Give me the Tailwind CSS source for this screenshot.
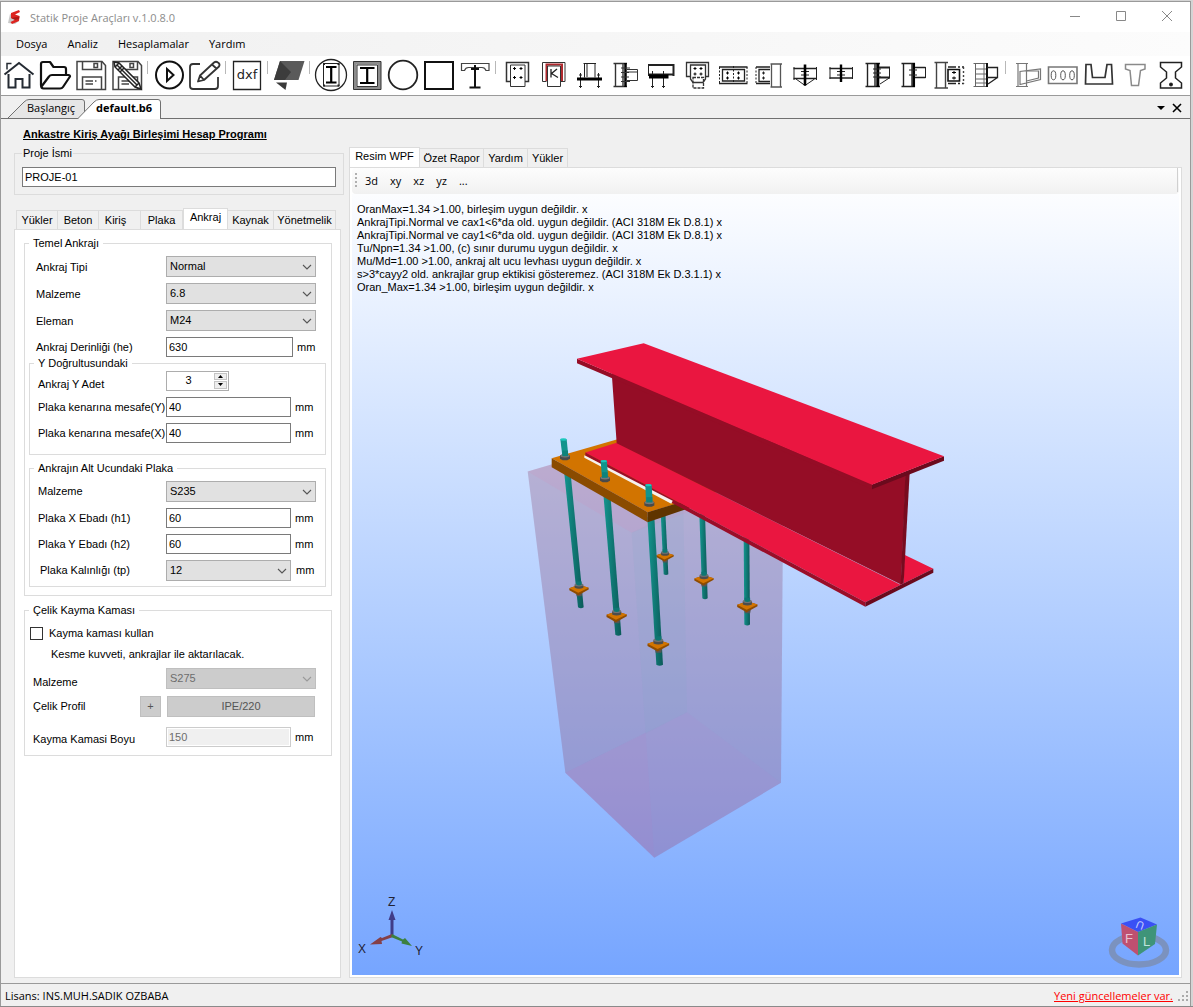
<!DOCTYPE html>
<html lang="tr">
<head>
<meta charset="utf-8">
<title>Statik Proje Araçları</title>
<script src="https://cdn.jsdelivr.net/npm/@tailwindcss/browser@4"></script>
</head>
<body class="bg-[#d4d4d4]">
<div class="flex h-screen flex-col border-b border-[#8a8a8a] pt-px pr-0.5 font-['Liberation_Sans',sans-serif] text-[11px] leading-[13px] text-black">
<div class="flex min-h-0 flex-1 flex-col border-t border-r border-l border-[#9a9a9a] bg-[#f0f0f0]">

  <!-- Title bar -->
  <header class="flex h-[30px] shrink-0 items-center bg-white pl-1.5 font-['Open_Sans',sans-serif] text-[11px] text-[#8c8c8c]">
    <svg class="mr-[7px] size-4" viewBox="0 0 16 16"><path d="M3 5L1 14L8 15L12 12L10 8Z" fill="#c9c9c9"/><path d="M4 4L12 1L13 3L8 5.500L12.500 7L12 12L5 15L3.500 13L8.500 10.500L4 9Z" fill="#dd2420"/><path d="M4 9L12.500 7.500L12 10L8 11Z" fill="#b01815"/></svg>
    <h1 class="flex-1">Statik Proje Araçları v.1.0.8.0</h1>
    <button aria-label="Küçült" class="flex h-full w-[46px] items-center justify-center"><svg class="size-3" viewBox="0 0 12 12" fill="none" stroke="#888"><path d="M1 5.500H11"/></svg></button>
    <button aria-label="Ekranı kapla" class="flex h-full w-[46px] items-center justify-center"><svg class="size-3" viewBox="0 0 12 12" fill="none" stroke="#888"><path d="M1.500 .5H10.500V9.500H1.500Z"/></svg></button>
    <button aria-label="Kapat" class="flex h-full w-[46px] items-center justify-center"><svg class="size-3" viewBox="0 0 12 12" fill="none" stroke="#888"><path d="M1 0L11 10M11 0L1 10"/></svg></button>
  </header>

  <!-- Menu -->
  <nav class="flex h-6 shrink-0 items-center gap-5 bg-linear-to-r from-[#f0f0f0] to-[#fcfcfc] pb-0.5 pl-[15px] font-['Open_Sans',sans-serif] text-[11px]">
    <button>Dosya</button><button>Analiz</button><button>Hesaplamalar</button><button>Yardım</button>
  </nav>

  <!-- Icon toolbar -->
  <div class="flex h-[39px] shrink-0 items-start overflow-hidden bg-white pt-px [&>button]:shrink-0 [&>i]:mx-0.5 [&>i]:mt-1 [&>i]:h-[13px] [&>i]:w-0.5 [&>i]:shrink-0 [&>i]:border-l [&>i]:border-[#b8b8b8] [&_svg]:size-9">
    <button aria-label="Ana sayfa"><svg viewBox="0 0 36 36" fill="none" stroke="#252b33" stroke-width="2"><path d="M3.500 17.500L18 6L32.500 17.500M7.500 17V30.500H14.500V22H21.500V30.500H28.500V17"/><path d="M6 12.500V6.500H10.500" stroke-width="1.500"/></svg></button>
    <button aria-label="Aç"><svg viewBox="0 0 36 36" fill="none" stroke="#111" stroke-width="2.200" stroke-linejoin="round"><path d="M4 28V7Q4 5 6 5H13L16.500 10H27Q29 10 29 12V17"/><path d="M4 28Q4 31.500 6.500 31.500H23Q25 31.500 26 30L33 19.500Q33 18 31.500 18H15Q13 18 12 19.500L4.500 29.500"/></svg></button>
    <button aria-label="Kaydet"><svg viewBox="0 0 36 36" fill="none" stroke="#444" stroke-width="1.500"><path d="M4 4.500H29L32.500 8.500V32.500H4Z"/><path d="M9.500 5V12.500H28.500V5M9.500 32V20H28.500V32"/><path d="M21 6.500H24.500V10.500H21Z"/><path d="M12.500 24H20M22 24H23.500M12.500 27H20"/></svg></button>
    <button aria-label="Farklı kaydet"><svg viewBox="0 0 36 36" fill="none" stroke="#444" stroke-width="1.500"><path d="M4 4.500H29L32.500 8.500V32.500H4Z"/><path d="M9.500 5V12.500H28.500V5M9.500 32V20H28.500V32"/><path d="M21 6.500H24.500V10.500H21Z"/><path d="M12.500 24H20M12.500 27H20"/><path d="M5 5L10 6L30 26L32 32L26 30L6 10Z" fill="#fff" stroke="#222"/><path d="M6 10L10 6M9 13L13 9M26 30L30 26M8 8L28 28M11 15L15 11" stroke="#222"/></svg></button>
    <i></i>
    <button aria-label="Çalıştır"><svg viewBox="0 0 36 36" fill="none" stroke="#111" stroke-width="2"><circle cx="18.500" cy="18" r="13.500"/><path d="M16 12L22.500 18L16 24Z"/></svg></button>
    <button aria-label="Düzenle"><svg viewBox="0 0 36 36" fill="none" stroke="#333" stroke-width="1.800" stroke-linejoin="round"><path d="M13 7H6Q3 7 3 10V29Q3 32 6 32H28Q31 32 31 29V20"/><path d="M11 24.500L13 18.500L27 5.500Q29 4 31 5.500Q33.500 7 32 9.500L17 23ZM25 7.500L30 12M13 18.500L17 23"/></svg></button>
    <i></i>
    <button aria-label="DXF"><svg viewBox="0 0 36 36"><path d="M4.500 4.500H31.500V32.500H4.500Z" fill="none" stroke="#222" stroke-width="1.300"/><text x="18" y="22" text-anchor="middle" font-family="DejaVu Sans" font-size="13" fill="#222">dxf</text></svg></button>
    <i></i>
    <button aria-label="Levha"><svg viewBox="0 0 36 36"><path d="M9 4H33.500L27.500 23H3Z" fill="#5a5a5a"/><path d="M9 4L20 15L14 23H3Z" fill="#3c3c3c"/><path d="M5 25.500H16L14.500 33Z" fill="#3a3a3a"/></svg></button>
    <i></i>
    <button aria-label="I kesit daire"><svg viewBox="0 0 36 36" fill="none" stroke="#222"><circle cx="18" cy="18" r="15.500" stroke-width="1.300"/><path d="M10.500 6.500H26V29H10.500Z"/><path d="M13 10H23.500M13 25.500H23.500M18.200 10V26" stroke="#000" stroke-width="2.200"/><path d="M10 7h2M24.500 7h2M10 28.500h2M24.500 28.500h2" stroke-width="2"/></svg></button>
    <button aria-label="I kesit kutu"><svg viewBox="0 0 36 36" fill="none" stroke="#333"><path d="M6 6H30.500V31H6Z" stroke="#8c8c8c" stroke-width="3"/><path d="M4.500 4.500H32V32.500H4.500ZM8 8H28.500V29.500H8Z"/><path d="M11 11H25.500M11 26H25.500M18.200 11V26" stroke="#000" stroke-width="2.200"/></svg></button>
    <button aria-label="Daire kesit"><svg viewBox="0 0 36 36" fill="none" stroke="#222" stroke-width="1.800"><circle cx="18" cy="18" r="14.300"/></svg></button>
    <button aria-label="Kare kesit"><svg viewBox="0 0 36 36" fill="none" stroke="#111" stroke-width="2"><path d="M4 5H32V32H4Z"/></svg></button>
    <button aria-label="Kompozit"><svg viewBox="0 0 36 36" fill="none" stroke="#444" stroke-width="1.200"><path d="M4.500 6.500H32V13.500H29Q28 10.500 25 10.500H11.500Q8.500 10.500 7.500 13.500H4.500Z"/><path d="M18 8V30.500M12.500 30.500H23.500M14 12H22" stroke="#111" stroke-width="2"/></svg></button>
    <i></i>
    <button aria-label="Birleşim 1"><svg viewBox="0 0 36 36" fill="none" stroke="#333"><path d="M11.500 24.500H7.500V5.500H29.500V24.500H26" stroke-width="1.500"/><path d="M11.500 8H26V29.500H11.500Z"/><path d="M14 11.500h3M15.500 10v3M20.500 11.500h3M22 10v3M14 20.500h3M15.500 19v3M20.500 20.500h3M22 19v3" stroke="#000"/></svg></button>
    <button aria-label="Birleşim 2"><svg viewBox="0 0 36 36" fill="none" stroke="#333"><path d="M11.500 24.500H7.500V5.500H30V24.500H26"/><path d="M11.500 24V7.500H27V24" stroke="#b0282d" stroke-width="2"/><path d="M12.500 29.500V9H25.500V29.500Z"/><path d="M16 12V20.500M22 12L16.500 16.500L23 20.500" stroke="#222" stroke-width="1.300"/></svg></button>
    <button aria-label="Birleşim 3"><svg viewBox="0 0 36 36" fill="none" stroke="#222"><path d="M13.500 6V20.500M24 6V20.500M12.500 6.500H25M16 6V20M9.500 16V31M27.500 16V31M8 18h3M26 18h3M8 29.500h3M26 29.500h3"/><path d="M6 22H31" stroke="#000" stroke-width="3"/></svg></button>
    <button aria-label="Birleşim 4"><svg viewBox="0 0 36 36" fill="none" stroke="#333"><path d="M8.500 6V30M6.500 6.500H20M6.500 29.500H20M16 6V30" stroke-width="1.400"/><path d="M18.500 6V30" stroke="#000" stroke-width="2.500"/><path d="M20 12.500H30.500V23.500H20M20 15H30M14 11h9M14 15.500h8M14 20h8M14 24.500h9"/></svg></button>
    <button aria-label="Birleşim 5"><svg viewBox="0 0 36 36" fill="none" stroke="#222"><path d="M5.500 8H30.500M30.500 7V19M5.500 17.500H31" stroke-width="2"/><path d="M5.500 7V19M9.500 14V31M20.500 14V31M8 29.500h3M19 29.500h3"/><path d="M6 19.500H25.500" stroke="#000" stroke-width="4"/></svg></button>
    <button aria-label="Birleşim 6"><svg viewBox="0 0 36 36" fill="none" stroke="#333" stroke-width="1.300"><path d="M11.500 19.500H7.500V5.500H29.500V19.500H26.500"/><path d="M11.500 8H26.500V22L24 25.500H14L11.500 22Z"/><path d="M14 20.500H24.500V31H14Z" stroke-dasharray="3 1"/><path d="M14.500 11.500h3M16 10v3M20.500 11.500h3M22 10v3M14.500 17h3M16 15.500v3M20.500 17h3M22 15.500v3" stroke="#000" stroke-width="1"/></svg></button>
    <button aria-label="Birleşim 7"><svg viewBox="0 0 36 36" fill="none" stroke="#222"><path d="M4 10H32.500M4 26.500H32.500" stroke-width="1.600"/><path d="M4.500 10V27M32 10V27M18.500 9V27" stroke-dasharray="2 1.500"/><path d="M7.500 12.500H29.500V24H7.500Z" stroke-width="1.300"/><path d="M11 16h3M12.500 14.500v3M22 16h3M23.500 14.500v3M11 21h3M12.500 19.500v3M22 21h3M23.500 19.500v3" stroke="#000"/></svg></button>
    <button aria-label="Birleşim 8"><svg viewBox="0 0 36 36" fill="none" stroke="#222"><path d="M19 10H5M19 26.500H5" stroke-width="1.500"/><path d="M5 10V27" stroke-dasharray="2 1.500"/><path d="M19 12.500H8V24.500H19" stroke-width="1.300"/><path d="M11 16h3M12.500 14.500v3M11 21h3M12.500 19.500v3"/><path d="M19.500 7H31M19.500 30H31M20.500 7V30M29.500 7V30" stroke="#555" stroke-width="1.300"/></svg></button>
    <button aria-label="Birleşim 9"><svg viewBox="0 0 36 36" fill="none" stroke="#222"><path d="M6.500 11.500H30M6.500 21.500H30" stroke-width="1.500"/><path d="M7 10V23M29.500 10V23M14 14.500h8M14 18h8M9 22L18 28.500L27.500 22"/><path d="M18 7.500V28.500" stroke="#000" stroke-width="2.600"/></svg></button>
    <button aria-label="Birleşim 10"><svg viewBox="0 0 36 36" fill="none" stroke="#222"><path d="M6.500 11.500H30M6.500 21H30" stroke-width="1.500"/><path d="M7 10V22M29.500 10V22M14 14.500h8M14 18h8"/><path d="M18 7.500V25" stroke="#000" stroke-width="2.400"/></svg></button>
    <button aria-label="Birleşim 11"><svg viewBox="0 0 36 36" fill="none" stroke="#222"><path d="M8.500 6V30M6.500 6.500H21M6.500 29.500H21M16 6V30" stroke-width="1.400"/><path d="M18.800 6V30" stroke="#000" stroke-width="3"/><path d="M20 10.500H31M20 20.500H31" stroke-width="1.800"/><path d="M30.500 10V21M21 27L31 20.500M14 12h8M14 16h8M14 20h8"/></svg></button>
    <button aria-label="Birleşim 12"><svg viewBox="0 0 36 36" fill="none" stroke="#222"><path d="M8.500 6V30M6.500 6.500H20M6.500 29.500H20M17 6V30" stroke-width="1.400"/><path d="M18.800 6V30" stroke="#000" stroke-width="2.500"/><path d="M20 10.500H30.500M20 20.500H30.500" stroke-width="1.600"/><path d="M30.500 10V21M14 13h8M14 18h8"/></svg></button>
    <button aria-label="Birleşim 13"><svg viewBox="0 0 36 36" fill="none" stroke="#444" stroke-width="1.400"><path d="M3.500 5.500H17M3.500 31H17M5.500 5.500V31M14.500 5.500V31"/><path d="M17 10H33M17 26.500H33" stroke="#222" stroke-dasharray="8 2 2 2"/><path d="M32.500 10V27" stroke-dasharray="2 2"/><path d="M17 12.500H28.500V24H17Z" stroke="#111" stroke-width="1.600"/><path d="M21 15.500h4M23 14v3M21 21h4M23 19.500v3" stroke="#000" stroke-width="1"/></svg></button>
    <button aria-label="Birleşim 14"><svg viewBox="0 0 36 36" fill="none" stroke="#666"><path d="M8.500 6V30M6.500 6.500H20M6.500 29.500H20M17 6V30M8 12H19M8 17H19M8 22H19M8 26H19"/><path d="M20 6V30" stroke="#111" stroke-width="2"/><path d="M20 10.500H30.500V20.500H20M21 27L30.500 20.500" stroke="#222" stroke-width="1.300"/></svg></button>
    <i></i>
    <button aria-label="Kiriş 1"><svg viewBox="0 0 36 36" fill="none" stroke="#777" stroke-width="1.200"><path d="M7 6.500H19M7 29.500H19M9 6V30M17.500 6V30M11 27.500V14.500L31.500 12V22.500Z"/><path d="M17.500 14H29.500V21L17.500 24"/></svg></button>
    <button aria-label="Delikli kiriş"><svg viewBox="0 0 36 36" fill="none" stroke="#555"><path d="M3.500 10H32V26.500H3.500Z" stroke="#777" stroke-width="1.600"/><ellipse cx="8.500" cy="18.300" rx="2.300" ry="4.500"/><ellipse cx="18" cy="18.300" rx="2.300" ry="4.500"/><ellipse cx="27" cy="18.300" rx="2.300" ry="4.500"/></svg></button>
    <button aria-label="U kesit"><svg viewBox="0 0 36 36" fill="none" stroke="#333" stroke-width="1.700"><path d="M4.500 27L5 7.500H10L11.500 20.500H24L26 7.500H30.500L31.500 27Z"/></svg></button>
    <button aria-label="T kesit"><svg viewBox="0 0 36 36" fill="none" stroke="#8a8a8a" stroke-width="1.500"><path d="M8.500 7.500H28V12L23.500 13.500L21.500 28.500H14.500L13 13.500L8.500 12Z"/></svg></button>
    <button aria-label="Köprü kirişi"><svg viewBox="0 0 36 36" fill="none" stroke="#222" stroke-width="1.500"><path d="M7.500 5.500H28.500V10L22.500 15V21L28.500 26V31H7.500V26L13.500 21V15L7.500 10Z"/><circle cx="18" cy="27.500" r="1.200" fill="#000"/></svg></button>
  </div>

  <!-- Document tabs -->
  <div class="flex h-6 shrink-0 items-end border-t border-b border-t-[#9a9a9a] border-b-[#707070] bg-[#f0f0f0] pl-1.5 font-['Open_Sans',sans-serif]">
    <button class="relative h-[19px] w-[78px] pb-0.5 pl-5 text-left">
      <svg class="absolute inset-0 h-full w-full" viewBox="0 0 78 19" preserveAspectRatio="none"><path d="M0.500 19.500L17 3Q19.500 .5 22 .5H75Q77.500 .5 77.500 3V19.500" fill="#e6e6e6" stroke="#707070"/></svg>
      <span class="relative text-[11px]">Başlangıç</span>
    </button>
    <button class="relative -mr-1 -mb-px -ml-2 h-5 w-[84px] pb-[3px] pl-[19px] text-left">
      <svg class="absolute inset-0 h-full w-full" viewBox="0 0 84 20" preserveAspectRatio="none"><path d="M0.500 20L17 3Q19.500 .5 22 .5H81Q83.500 .5 83.500 3V20" fill="#fff" stroke="#707070"/></svg>
      <span class="relative text-[11px] font-bold">default.b6</span>
    </button>
    <div class="flex flex-1 items-center justify-end gap-[7px] self-center pt-0.5 pr-2">
      <button aria-label="Sekme listesi"><svg class="h-1 w-2" viewBox="0 0 8 4"><path d="M0 0H8L4 4Z"/></svg></button>
      <button aria-label="Sekmeyi kapat"><svg class="size-[10px]" viewBox="0 0 10 10"><path d="M1 1L9 9M9 1L1 9" stroke="#000" stroke-width="1.600"/></svg></button>
    </div>
  </div>

  <main class="flex min-h-0 flex-1 gap-2 pt-2 pr-2 pb-[5px] pl-[13px]">
    <!-- Input panel -->
    <section class="flex w-[327px] shrink-0 flex-col">
      <h2 class="pl-[9px] text-[11px] leading-[14px] font-bold underline">Ankastre Kiriş Ayağı Birleşimi Hesap Programı</h2>
      <fieldset class="mt-[6px] border border-[#dcdcdc] px-[7px] pb-[7px]">
        <legend class="px-px">Proje İsmi</legend>
        <input aria-label="Proje İsmi" value="PROJE-01" class="mt-[7px] block h-5 w-[314px] max-w-full border border-[#7a7a7a] bg-white px-0.5">
      </fieldset>

      <div class="mt-[13px] flex items-end px-[2px] text-center [&>button]:h-[19px] [&>button]:border-t [&>button]:border-r [&>button]:border-[#dcdcdc]">
        <button class="w-[42px] border-l">Yükler</button>
        <button class="w-[41px]">Beton</button>
        <button class="w-[42px] pr-2">Kiriş</button>
        <button class="w-[42px]">Plaka</button>
        <button class="-mb-px w-[45px] border-l bg-white pb-1 [&&]:h-[22px]">Ankraj</button>
        <button class="w-[46px]">Kaynak</button>
        <button class="w-[62px]">Yönetmelik</button>
      </div>

      <form class="flex-1 border border-[#dcdcdc] bg-white pt-[7px] pr-2 pl-[9px] [&_legend]:px-1 [&_select]:h-[21px] [&_select]:w-full [&_select]:appearance-none [&_select]:border [&_select]:border-[#adadad] [&_select]:bg-[#e1e1e1] [&_select]:px-[3px] [&_.chev]:pointer-events-none [&_.chev]:absolute [&_.chev]:top-2 [&_.chev]:right-1 [&_.chev]:h-[6px] [&_.chev]:w-[10px]">
        <fieldset class="border border-[#dcdcdc] pr-[5px] pb-2 pl-1">
          <legend>Temel Ankrajı</legend>
          <div class="flex flex-col gap-1.5 pt-1.5 pl-[7px]">
            <div class="flex items-center"><label for="tip" class="w-[130px] pt-0.5">Ankraj Tipi</label><span class="relative w-[150px]"><select id="tip"><option>Normal</option></select><svg class="chev" viewBox="0 0 10 6" fill="none" stroke="#555" stroke-width="1.100"><path d="M1 1L5 5L9 1"/></svg></span></div>
            <div class="flex items-center"><label for="mal1" class="w-[130px] pt-0.5">Malzeme</label><span class="relative w-[150px]"><select id="mal1"><option>6.8</option></select><svg class="chev" viewBox="0 0 10 6" fill="none" stroke="#555" stroke-width="1.100"><path d="M1 1L5 5L9 1"/></svg></span></div>
            <div class="flex items-center"><label for="ele" class="w-[130px] pt-0.5">Eleman</label><span class="relative w-[150px]"><select id="ele"><option>M24</option></select><svg class="chev" viewBox="0 0 10 6" fill="none" stroke="#555" stroke-width="1.100"><path d="M1 1L5 5L9 1"/></svg></span></div>
            <div class="flex items-center"><label for="he" class="w-[130px]">Ankraj Derinliği (he)</label><input id="he" value="630" class="h-5 w-[127px] border border-[#7a7a7a] px-0.5"><span class="ml-1">mm</span></div>
          </div>

          <fieldset class="border border-[#dcdcdc] pb-[11px] pl-2">
            <legend class="-ml-1">Y Doğrultusundaki</legend>
            <div class="flex flex-col gap-1.5">
              <div class="flex items-center"><label for="adet" class="w-[128px] pt-2">Ankraj Y Adet</label>
                <span class="flex h-5 w-[63px] border border-[#adadad] bg-white">
                  <input id="adet" type="number" value="3" class="min-w-0 flex-1 [appearance:textfield] pl-3 text-center">
                  <span class="flex w-[15px] flex-col gap-px bg-white p-px">
                    <button type="button" aria-label="Artır" class="flex flex-1 items-center justify-center border border-[#c4c4c4] bg-[#eee]"><svg class="h-[3px] w-[5px]" viewBox="0 0 5 3"><path d="M0 3H5L2.500 0Z"/></svg></button>
                    <button type="button" aria-label="Azalt" class="flex flex-1 items-center justify-center border border-[#c4c4c4] bg-[#eee]"><svg class="h-[3px] w-[5px]" viewBox="0 0 5 3"><path d="M0 0H5L2.500 3Z"/></svg></button>
                  </span>
                </span></div>
              <div class="flex items-center"><label for="my" class="w-[128px]">Plaka kenarına mesafe(Y)</label><input id="my" value="40" class="h-5 w-[125px] border border-[#7a7a7a] px-0.5"><span class="ml-1">mm</span></div>
              <div class="flex items-center"><label for="mx" class="w-[128px]">Plaka kenarına mesafe(X)</label><input id="mx" value="40" class="h-5 w-[125px] border border-[#7a7a7a] px-0.5"><span class="ml-1">mm</span></div>
            </div>
          </fieldset>

          <fieldset class="mt-[7px] border border-[#dcdcdc] pb-[5px] pl-2">
            <legend class="-ml-1">Ankrajın Alt Ucundaki Plaka</legend>
            <div class="flex flex-col gap-1.5 pt-1.5">
              <div class="flex items-center"><label for="mal2" class="w-[128px]">Malzeme</label><span class="relative w-[150px]"><select id="mal2"><option>S235</option></select><svg class="chev" viewBox="0 0 10 6" fill="none" stroke="#555" stroke-width="1.100"><path d="M1 1L5 5L9 1"/></svg></span></div>
              <div class="flex items-center"><label for="h1" class="w-[128px]">Plaka X Ebadı (h1)</label><input id="h1" value="60" class="h-5 w-[125px] border border-[#7a7a7a] px-0.5"><span class="ml-1">mm</span></div>
              <div class="flex items-center"><label for="h2" class="w-[128px]">Plaka Y Ebadı (h2)</label><input id="h2" value="60" class="h-5 w-[125px] border border-[#7a7a7a] px-0.5"><span class="ml-1">mm</span></div>
              <div class="flex items-center"><label for="tp" class="w-[128px] pl-0.5">Plaka Kalınlığı (tp)</label><span class="relative w-[125px]"><select id="tp"><option>12</option></select><svg class="chev" viewBox="0 0 10 6" fill="none" stroke="#555" stroke-width="1.100"><path d="M1 1L5 5L9 1"/></svg></span><span class="ml-[5px]">mm</span></div>
            </div>
          </fieldset>
        </fieldset>

        <fieldset class="mt-2 border border-[#dcdcdc] pb-2 pl-2">
          <legend class="-ml-1">Çelik Kayma Kaması</legend>
          <label class="-ml-[3px] flex items-center gap-1.5 pt-[10px]"><input type="checkbox" class="size-[13px] appearance-none border border-[#333] bg-white">Kayma kaması kullan</label>
          <p class="pt-2 pl-[18px]">Kesme kuvveti, ankrajlar ile aktarılacak.</p>
          <div class="mt-[7px] flex items-center"><label for="mal3" class="w-[133px] pt-2">Malzeme</label><span class="relative w-[150px]"><select id="mal3" disabled class="text-[#6d6d6d] opacity-100 [&&]:border-[#bfbfbf] [&&]:bg-[#ccc]"><option>S275</option></select><svg class="chev" viewBox="0 0 10 6" fill="none" stroke="#999" stroke-width="1.100"><path d="M1 1L5 5L9 1"/></svg></span></div>
          <div class="mt-[7px] flex items-center"><span class="w-[107px]">Çelik Profil</span><button type="button" disabled class="mr-1.5 h-[21px] w-[21px] border border-[#bfbfbf] bg-[#ccc] text-[#555]">+</button><button type="button" disabled class="h-[21px] w-[148px] border border-[#bfbfbf] bg-[#ccc] text-[#555]">IPE/220</button></div>
          <div class="mt-[10px] flex items-center"><label for="boy" class="w-[133px] pt-1">Kayma Kamasi Boyu</label><input id="boy" disabled value="150" class="h-5 w-[125px] border border-[#ccc] bg-[#f0f0f0] px-0.5 text-[#6d6d6d] ring-1 ring-white ring-inset"><span class="ml-1">mm</span></div>
        </fieldset>
      </form>
    </section>

    <!-- Viewer -->
    <section class="flex min-w-0 flex-1 flex-col pt-5">
      <div class="flex items-end [&>button]:h-[19px] [&>button]:border-t [&>button]:border-r [&>button]:border-[#dcdcdc]">
        <button class="-mb-px w-[71px] border-l bg-white pb-1 [&&]:h-[21px]">Resim WPF</button>
        <button class="w-16">Özet Rapor</button>
        <button class="w-11">Yardım</button>
        <button class="w-10">Yükler</button>
      </div>
      <div class="flex min-h-0 flex-1 flex-col border border-[#dcdcdc] bg-white px-0.5 pb-0.5">
        <div class="flex h-[26px] shrink-0 items-center gap-3 rounded-sm bg-linear-to-b from-[#fdfdfd] to-[#f1f1f1] pb-0.5 pl-[3px] font-['Open_Sans',sans-serif]">
          <svg class="-mr-1 h-[14px] w-0.5" viewBox="0 0 2 14" fill="#b0b0b0"><path d="M0 0h2v2H0zM0 4h2v2H0zM0 8h2v2H0zM0 12h2v2H0z"/></svg>
          <button>3d</button><button>xy</button><button>xz</button><button>yz</button><button>...</button>
          <i class="mr-px ml-auto h-full border-r border-[#d0d0d0]"></i>
        </div>
        <div class="relative min-h-0 flex-1 bg-linear-to-b from-[#fcfdff] to-[#76a5ff]">
          <svg class="absolute inset-0 h-full w-full" viewBox="352 194 827 780">
            <defs>
              <linearGradient id="rod" x1="0" x2="1"><stop offset="0" stop-color="#14968f"/><stop offset="1" stop-color="#0b5a58"/></linearGradient>
              <g id="foot">
                <path d="M-9 12H10L8 22H-7Z" fill="#555"/>
                <path d="M-29 -2L0 -12L29 -3V2L-2 19L-29 4Z" fill="#8f4c00"/>
                <path d="M-29 -2L0 -12L29 -3L-2 12Z" fill="#d27400"/>
                <path d="M-13 -12Q0 -18 13 -12V-3Q0 3 -13 -3Z" fill="#4d4d4d"/>
                <ellipse cy="-12" rx="13" ry="5" fill="#727272"/>
                <path d="M-8 -22H8V-12Q0 -8 -8 -12Z" fill="#0e7672"/>
              </g>
              <g id="nut"><path d="M-15 -5L-8 -9H8L15 -5V5L7 9H-7L-15 5Z" fill="#4a4a4a"/><ellipse cy="-4" rx="14" ry="5" fill="#767676"/></g>
            </defs>
            <g transform="translate(500 330) scale(.33333)">
              <!-- concrete pedestal -->
              <path d="M83 423L500 300L850 440L843 1357L463 1582L196 1327Z" fill="#8e5782" fill-opacity=".34"/>
              <path d="M83 423L500 300L850 440L395 607Z" fill="#e878a8" fill-opacity=".1"/>
              <path d="M395 607L550 530L561 1145L437 1210Z" fill="#7fa8c8" fill-opacity=".14"/>
              <path d="M196 1327L561 1145L843 1357L463 1582Z" fill="#b880d0" fill-opacity=".1"/>
              <path d="M196 1327L437 1207L463 1582Z" fill="#d070c0" fill-opacity=".08"/>
              <!-- rear anchors -->
              <path d="M482 545H496L505 731Q498 736 491 731Z" fill="url(#rod)"/><use href="#foot" transform="translate(495 676) scale(.9)"/>
              <path d="M598 550H615L623 803Q615 809 607 803Z" fill="url(#rod)"/><use href="#foot" x="612" y="746"/>
              <path d="M731 620H748L750 882Q742 888 733 882Z" fill="url(#rod)"/><use href="#foot" transform="translate(742 825) scale(1.05)"/>
              <!-- front anchors, below the base plate -->
              <path d="M192 420H211L251 830Q243 836 234 830Z" fill="url(#rod)"/><use href="#foot" x="237" y="775"/>
              <path d="M310 490H331L364 913Q355 919 346 913Z" fill="url(#rod)"/><use href="#foot" transform="translate(350 855) scale(1.05)"/>
              <path d="M442 560H463L489 1003Q479 1009 469 1003Z" fill="url(#rod)"/><use href="#foot" transform="translate(475 942) scale(1.12)"/>
              <!-- base plate -->
              <path d="M155 383L350 327L700 470L443 545Z" fill="#d27400"/>
              <path d="M155 383L443 545V575L155 410Z" fill="#8a4b00"/>
              <path d="M443 545L600 498V522L443 575Z" fill="#5f3400"/>
              <!-- beam -->
              <path d="M256 366L350 337L1200 762L1211 757L1213 673L1300 715L1096 815Z" fill="#ea1640"/>
              <path d="M256 366L1096 815V829L515 517L256 375Z" fill="#9a0e28"/>
              <path d="M1096 815L1300 715V727L1096 829Z" fill="#6b0a1d"/>
              <path d="M335 125L1116 465L1218 430L1203 762L350 338Z" fill="#950d26"/>
              <path d="M1216 430L1229 428L1211 758L1202 762Z" fill="#780b1f"/>
              <path d="M231 85L1116 460V476L231 98Z" fill="#950d26"/>
              <path d="M1116 462L1332 377V391L1116 476Z" fill="#6b0a1d"/>
              <path d="M231 85L431 38L1332 377L1116 463Z" fill="#ea1640"/>
              <!-- weld -->
              <path d="M253 374L518 511L514 520L253 382Z" fill="#f6f2ee"/>
              <!-- anchor tops -->
              <path d="M181 326H200L205 376H187Z" fill="#12948c"/><ellipse cx="190.500" cy="327" rx="9.500" ry="3.500" fill="#1bc8bd"/><use href="#nut" x="195" y="380"/><path d="M187 360H204V377H187Z" fill="#0f827c"/>
              <path d="M302 391H321L324 442H306Z" fill="#12948c"/><ellipse cx="311.500" cy="392" rx="9.500" ry="3.500" fill="#1bc8bd"/><use href="#nut" x="315" y="446"/><path d="M306 425H323V442H306Z" fill="#0f827c"/>
              <path d="M436 463H455L458 516H438Z" fill="#12948c"/><ellipse cx="445.500" cy="464" rx="9.500" ry="3.500" fill="#1bc8bd"/><use href="#nut" x="448" y="520"/><path d="M439 500H457V516H439Z" fill="#0f827c"/>
            </g>
          </svg>
          <p class="absolute top-[9px] left-[5px]">OranMax=1.34 &gt;1.00, birleşim uygun değildir. x<br>AnkrajTipi.Normal ve cax1&lt;6*da old. uygun değildir. (ACI 318M Ek D.8.1) x<br>AnkrajTipi.Normal ve cay1&lt;6*da old. uygun değildir. (ACI 318M Ek D.8.1) x<br>Tu/Npn=1.34 &gt;1.00, (c) sınır durumu uygun değildir. x<br>Mu/Md=1.00 &gt;1.00, ankraj alt ucu levhası uygun değildir. x<br>s&gt;3*cayy2 old. ankrajlar grup ektikisi gösteremez. (ACI 318M Ek D.3.1.1) x<br>Oran_Max=1.34 &gt;1.00, birleşim uygun değildir. x</p>
          <svg class="absolute bottom-[13px] left-1 h-[70px] w-[72px]" viewBox="356 892 72 70" font-family="Liberation Sans" font-size="12" fill="#223">
            <path d="M390.500 935V920H388.500L392 910L395.500 920H393.500V935Z" fill="#403c88"/>
            <path d="M392 934L382 938L380.500 937L370 944.500L382 944L381.500 941L393 937Z" fill="#854048"/>
            <path d="M392 934L403 939.500L405 938L412 946L401.500 943.500L402 941.500L391 937Z" fill="#3c8040"/>
            <text x="388" y="906">Z</text><text x="358" y="953">X</text><text x="415" y="955">Y</text>
          </svg>
          <svg class="absolute right-2 bottom-[5px] h-[56px] w-[64px]" viewBox="1107 914 64 56" font-family="Liberation Sans" font-size="13">
            <ellipse cx="1139" cy="950" rx="27" ry="14.500" fill="none" stroke="#7b92bf" stroke-width="6.500"/>
            <path d="M1121 923.500L1140.500 917.500L1157 924.500L1138 932Z" fill="#3a50f5"/>
            <path d="M1121 923.500L1138 932V955.500L1122.500 943.500Z" fill="#bf5070"/>
            <path d="M1138 932L1157 924.500L1155 944L1138 955.500Z" fill="#3f9479"/>
            <text x="1125" y="943" fill="#e9c3d0">F</text><text x="1143" y="946" fill="#bfe3dc">L</text>
            <text transform="translate(1145 923) rotate(200)" fill="#c5ccff" font-size="11">U</text>
          </svg>
        </div>
      </div>
    </section>
  </main>

  <!-- Status bar -->
  <footer class="flex h-[23px] shrink-0 items-center justify-between border-t border-[#9a9a9a] bg-[#f0f0f0] pr-px pl-1 font-['Open_Sans',sans-serif]">
    <span>Lisans: INS.MUH.SADIK OZBABA</span>
    <span class="flex items-center gap-1"><a href="#" class="text-[#f00] underline">Yeni güncellemeler var.</a><svg class="mt-1 size-3" viewBox="0 0 12 12" fill="#aaa"><path d="M9 0h2v2H9zM9 4h2v2H9zM9 8h2v2H9zM5 4h2v2H5zM5 8h2v2H5zM1 8h2v2H1z"/></svg></span>
  </footer>
</div>
</div>
</body>
</html>
